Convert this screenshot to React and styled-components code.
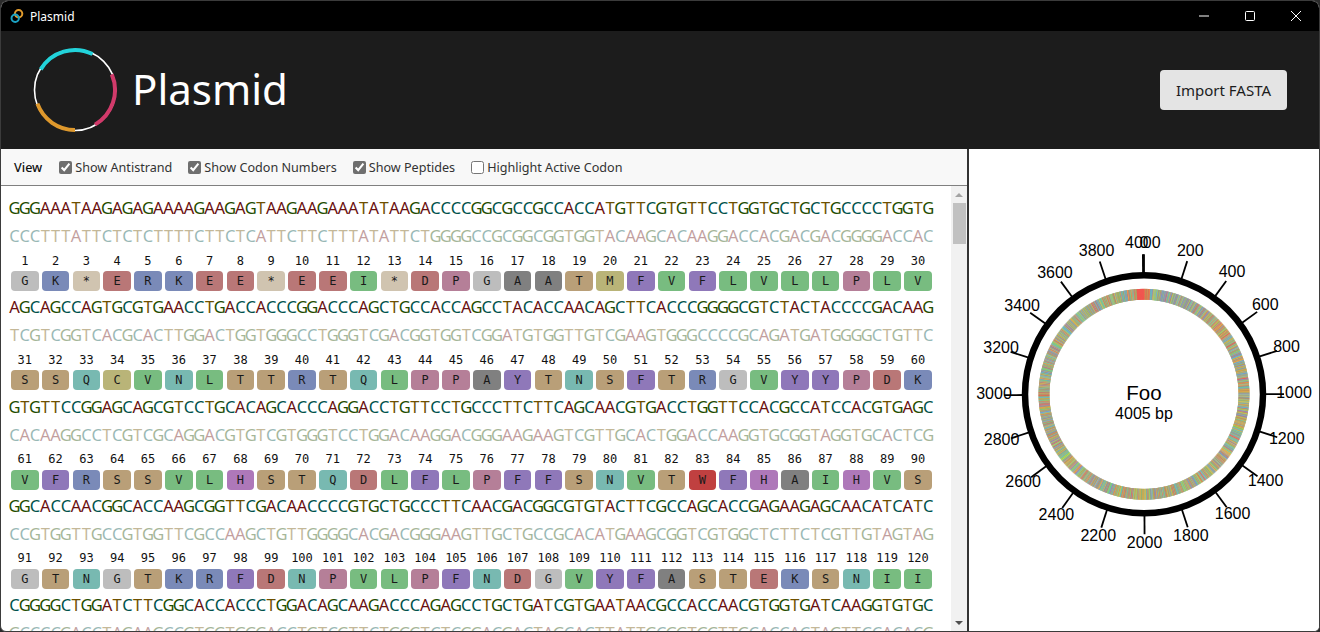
import React from 'react';
import styled, { createGlobalStyle } from 'styled-components';

const rows = [
  {
    seq: 'GGGAAATAAGAGAGAAAAGAAGAGTAAGAAGAAATATAAGACCCCGGCGCCGCCACCATGTTCGTGTTCCTGGTGCTGCTGCCCCTGGTG',
    peptide: 'GK*ERKEE*EEI*DPGAATMFVFLVLLPLV',
  },
  {
    seq: 'AGCAGCCAGTGCGTGAACCTGACCACCCGGACCCAGCTGCCACCAGCCTACACCAACAGCTTCACCCGGGGCGTCTACTACCCCGACAAG',
    peptide: 'SSQCVNLTTRTQLPPAYTNSFTRGVYYPDK',
  },
  {
    seq: 'GTGTTCCGGAGCAGCGTCCTGCACAGCACCCAGGACCTGTTCCTGCCCTTCTTCAGCAACGTGACCTGGTTCCACGCCATCCACGTGAGC',
    peptide: 'VFRSSVLHSTQDLFLPFFSNVTWFHAIHVS',
  },
  {
    seq: 'GGCACCAACGGCACCAAGCGGTTCGACAACCCCGTGCTGCCCTTCAACGACGGCGTGTACTTCGCCAGCACCGAGAAGAGCAACATCATC',
    peptide: 'GTNGTKRFDNPVLPFNDGVYFASTEKSNII',
  },
  {
    seq: 'CGGGGCTGGATCTTCGGCACCACCCTGGACAGCAAGACCCAGAGCCTGCTGATCGTGAATAACGCCACCAACGTGGTGATCAAGGTGTGC',
    peptide: 'RGWIFGTTLDSKTQSLLIVNNATNVVIKVC',
  },
];

const complement = { A: 'T', T: 'A', G: 'C', C: 'G' };
const baseColors = { A: '#6a1010', T: '#6e5000', G: '#1f4d00', C: '#00524c' };
const ringColors = { A: '#f0524c', T: '#e8c040', G: '#80d060', C: '#58a4f0' };

const peptideColors = {
  G: '#bdbdbd',
  A: '#808080',
  K: '#7a8ab8',
  R: '#7a8ab8',
  '*': '#d0c4b0',
  E: '#b97777',
  D: '#b97777',
  I: '#78bc80',
  L: '#78bc80',
  V: '#78bc80',
  P: '#b57f98',
  T: '#b99f78',
  S: '#b99f78',
  M: '#b9b478',
  C: '#b9b478',
  F: '#8f78b9',
  Y: '#8f78b9',
  N: '#78b9b1',
  Q: '#78b9b1',
  H: '#ae78b9',
  W: '#c04040',
};

const options = [
  { label: 'Show Antistrand', checked: true },
  { label: 'Show Codon Numbers', checked: true },
  { label: 'Show Peptides', checked: true },
  { label: 'Highlight Active Codon', checked: false },
];

// only the first rows of the sequence are readable, the rest of the ring is filled in
const buildPlasmid = () => {
  const known = rows.map((r) => r.seq).join('');
  const total = 4005;
  const tail = 42;
  let seed = 20211;
  let out = known;
  while (out.length < total - tail) {
    seed = (seed * 1664525 + 1013904223) % 4294967296;
    const n = seed / 4294967296;
    out += n < 0.22 ? 'A' : n < 0.44 ? 'T' : n < 0.72 ? 'G' : 'C';
  }
  return out + 'A'.repeat(tail);
};

const plasmid = buildPlasmid();
const CX = 175;
const CY = 245.3;

const polar = (r, deg, shift = 0) => {
  const a = (deg * Math.PI) / 180;
  return { x: CX + r * Math.sin(a), y: CY - r * Math.cos(a) + shift };
};

const ringSegments = plasmid.split('').map((base, i) => {
  const deg = (i / plasmid.length) * 360;
  const a = polar(94.6, deg);
  const b = polar(105.4, deg);
  return { base, a, b };
});

const tickValues = Array.from({ length: 21 }, (_, i) => i * 200);

const GlobalStyle = createGlobalStyle`
  html, body {
    margin: 0;
    padding: 0;
    background: #2b2b2b;
    overflow: hidden;
  }
  * {
    box-sizing: border-box;
  }
`;

const Window = styled.div`
  width: 1320px;
  height: 632px;
  display: flex;
  flex-direction: column;
  border: 1px solid #3b3b3b;
  border-radius: 8px 8px 6px 6px;
  overflow: hidden;
  background: #fff;
  font-family: 'Noto Sans', 'Open Sans', sans-serif;
`;

const TitleBar = styled.div`
  height: 30px;
  flex: none;
  display: flex;
  align-items: center;
  background: #000;
  color: #fff;
  font-size: 12px;
  padding-left: 9px;
`;

const TitleText = styled.span`
  margin-left: 6px;
  flex: 1;
`;

const WinButton = styled.div`
  width: 46px;
  height: 30px;
  display: flex;
  align-items: center;
  justify-content: center;
`;

const Header = styled.header`
  height: 118px;
  flex: none;
  display: flex;
  align-items: center;
  justify-content: space-between;
  background: #1c1c1c;
  padding: 0 32px 0 31px;
`;

const Brand = styled.div`
  display: flex;
  align-items: center;
  gap: 14px;
`;

const BrandName = styled.h1`
  margin: 0 0 2px;
  color: #fff;
  font-size: 42px;
  font-weight: 400;
  line-height: 1;
`;

const ImportButton = styled.button`
  width: 127px;
  height: 40px;
  border: none;
  border-radius: 4px;
  background: #e4e4e4;
  color: #1c1c1c;
  font-family: inherit;
  font-size: 15px;
  padding: 0;
`;

const Main = styled.main`
  flex: 1;
  min-height: 0;
  display: flex;
`;

const LeftPane = styled.section`
  width: 968px;
  flex: none;
  display: flex;
  flex-direction: column;
  border-right: 2px solid #333;
`;

const Toolbar = styled.div`
  height: 37px;
  flex: none;
  display: flex;
  align-items: center;
  gap: 16px;
  padding: 1px 0 0 13px;
  background: #f8f8f8;
  border-bottom: 1.5px solid #808080;
  font-size: 12.6px;
  color: #333;
`;

const ToolbarLabel = styled.span`
  font-weight: 500;
  color: #111;
  margin-right: 1px;
`;

const Option = styled.label`
  display: flex;
  align-items: center;
  gap: 3px;
`;

const Check = styled.input`
  width: 13px;
  height: 13px;
  margin: 0;
  accent-color: #6f6f6f;
`;

const Viewer = styled.div`
  flex: 1;
  min-height: 0;
  display: flex;
`;

const Sequence = styled.div`
  flex: 1;
  min-width: 0;
  overflow: hidden;
  padding: 8px 0 0 8.4px;
`;

const Block = styled.div`
  width: 924px;
  margin-bottom: 2.25px;
`;

const Strand = styled.div`
  height: 28px;
  display: grid;
  grid-template-columns: repeat(90, minmax(0, 1fr));
  align-items: center;
  font-size: 16.5px;
  line-height: 28px;
  opacity: ${({ $anti }) => ($anti ? 0.4 : 1)};
`;

const Base = styled.span`
  display: flex;
  justify-content: center;
  color: ${({ $base }) => baseColors[$base]};
`;

const Numbers = styled.div`
  height: 21px;
  display: grid;
  grid-template-columns: repeat(30, minmax(0, 1fr));
  align-items: center;
  font-family: 'DejaVu Sans Mono', monospace;
  font-size: 12px;
  color: #111;
  text-align: center;
`;

const Peptides = styled.div`
  height: 20px;
  display: grid;
  grid-template-columns: repeat(30, minmax(0, 1fr));
`;

const Peptide = styled.div`
  margin: 0 1.6px;
  border-radius: 4px;
  background: ${({ $code }) => peptideColors[$code]};
  color: #1a1a1a;
  font-family: 'DejaVu Sans Mono', monospace;
  font-size: 12px;
  line-height: 20px;
  text-align: center;
`;

const Scrollbar = styled.div`
  width: 16px;
  flex: none;
  display: flex;
  flex-direction: column;
  align-items: center;
  background: #f1f1f1;
`;

const ArrowSlot = styled.div`
  height: 17px;
  flex: none;
  display: flex;
  align-items: center;
  justify-content: center;
`;

const Arrow = styled.div`
  width: 0;
  height: 0;
  border-left: 4px solid transparent;
  border-right: 4px solid transparent;
  border-bottom: ${({ $down }) => ($down ? '0' : '4px solid #a3a3a3')};
  border-top: ${({ $down }) => ($down ? '4px solid #505050' : '0')};
`;

const Thumb = styled.div`
  width: 13px;
  height: 41px;
  flex: none;
  background: #c1c1c1;
`;

const Spacer = styled.div`
  flex: 1;
`;

const RightPane = styled.aside`
  flex: 1;
  min-width: 0;
  display: flex;
  background: #fff;
`;

const MapLabel = styled.text`
  font-family: 'Liberation Sans', Arial, sans-serif;
  font-size: ${({ $size }) => $size}px;
  fill: #000;
  text-anchor: middle;
  dominant-baseline: central;
`;

const WindowIcon = () => (
  <svg width="14" height="16" viewBox="0 0 14 16" fill="none">
    <circle cx="8.6" cy="5.8" r="3.7" stroke="#e09a2c" strokeWidth="2" />
    <circle cx="5.2" cy="10.2" r="3.7" stroke="#1ba3c4" strokeWidth="2" />
  </svg>
);

const arc = (cx, cy, r, from, to) => {
  const p = (d) => {
    const a = (d * Math.PI) / 180;
    return `${cx + r * Math.sin(a)} ${cy - r * Math.cos(a)}`;
  };
  return `M ${p(from)} A ${r} ${r} 0 ${to - from > 180 ? 1 : 0} 1 ${p(to)}`;
};

const Logo = () => (
  <svg width="86" height="86" viewBox="0 0 86 86" fill="none">
    <circle cx="43" cy="43" r="40.5" stroke="#fff" strokeWidth="1.6" />
    <path d={arc(43, 43, 40, -59, 26)} stroke="#22d3da" strokeWidth="4" />
    <path d={arc(43, 43, 40, 67, 150)} stroke="#d13a6a" strokeWidth="4" />
    <path d={arc(43, 43, 40, 180, 250)} stroke="#de982c" strokeWidth="4" />
  </svg>
);

const PlasmidMap = () => (
  <svg width="350" height="482" viewBox="0 0 350 482">
    <g strokeWidth="0.5">
      {ringSegments.map((s, i) => (
        <line key={i} x1={s.a.x} y1={s.a.y} x2={s.b.x} y2={s.b.y} stroke={ringColors[s.base]} />
      ))}
    </g>
    <circle cx={CX} cy={CY} r="119" fill="none" stroke="#000" strokeWidth="6.5" />
    {tickValues.map((value) => {
      const deg = (value / plasmid.length) * 360;
      const from = polar(121, deg);
      const to = polar(140, deg);
      const label = polar(150, deg, -1.5);
      return (
        <g key={value}>
          <line x1={from.x} y1={from.y} x2={to.x} y2={to.y} stroke="#000" strokeWidth="1.8" />
          <MapLabel x={label.x} y={label.y} $size={16}>
            {value}
          </MapLabel>
        </g>
      );
    })}
    <MapLabel x={CX} y={CY - 1.5} $size={20.5}>
      Foo
    </MapLabel>
    <MapLabel x={CX} y={CY + 19.5} $size={16}>
      4005 bp
    </MapLabel>
  </svg>
);

const SequenceBlock = ({ seq, peptide, start }) => (
  <Block>
    <Strand>
      {seq.split('').map((b, i) => (
        <Base key={i} $base={b}>
          {b}
        </Base>
      ))}
    </Strand>
    <Strand $anti>
      {seq.split('').map((b, i) => (
        <Base key={i} $base={complement[b]}>
          {complement[b]}
        </Base>
      ))}
    </Strand>
    <Numbers>
      {peptide.split('').map((_, i) => (
        <span key={i}>{start + i}</span>
      ))}
    </Numbers>
    <Peptides>
      {peptide.split('').map((p, i) => (
        <Peptide key={i} $code={p}>
          {p}
        </Peptide>
      ))}
    </Peptides>
  </Block>
);

const App = () => {
  return (
    <>
      <GlobalStyle />
      <Window>
        <TitleBar>
          <WindowIcon />
          <TitleText>Plasmid</TitleText>
          <WinButton>
            <svg width="10" height="10" viewBox="0 0 10 10">
              <path d="M0 5h10" stroke="#fff" strokeWidth="1" />
            </svg>
          </WinButton>
          <WinButton>
            <svg width="10" height="10" viewBox="0 0 10 10" fill="none">
              <rect x="0.5" y="0.5" width="9" height="9" rx="1" stroke="#fff" />
            </svg>
          </WinButton>
          <WinButton>
            <svg width="10" height="10" viewBox="0 0 10 10">
              <path d="M0 0l10 10M10 0L0 10" stroke="#fff" strokeWidth="1" />
            </svg>
          </WinButton>
        </TitleBar>
        <Header>
          <Brand>
            <Logo />
            <BrandName>Plasmid</BrandName>
          </Brand>
          <ImportButton>Import FASTA</ImportButton>
        </Header>
        <Main>
          <LeftPane>
            <Toolbar>
              <ToolbarLabel>View</ToolbarLabel>
              {options.map((o) => (
                <Option key={o.label}>
                  <Check type="checkbox" defaultChecked={o.checked} />
                  {o.label}
                </Option>
              ))}
            </Toolbar>
            <Viewer>
              <Sequence>
                {rows.map((r, i) => (
                  <SequenceBlock key={i} seq={r.seq} peptide={r.peptide} start={i * 30 + 1} />
                ))}
              </Sequence>
              <Scrollbar>
                <ArrowSlot>
                  <Arrow />
                </ArrowSlot>
                <Thumb />
                <Spacer />
                <ArrowSlot>
                  <Arrow $down />
                </ArrowSlot>
              </Scrollbar>
            </Viewer>
          </LeftPane>
          <RightPane>
            <PlasmidMap />
          </RightPane>
        </Main>
      </Window>
    </>
  );
};

export default App;
